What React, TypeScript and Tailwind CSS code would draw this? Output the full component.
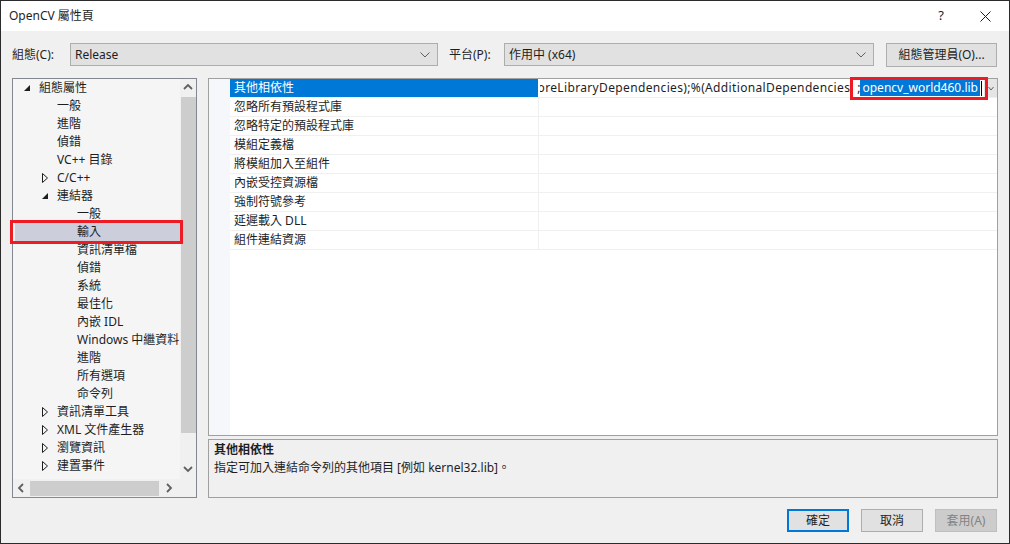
import React from 'react';

const FONT = { fontFamily: '"Noto Sans", "Noto Sans CJK TC", sans-serif' };

type TreeItem = { label: string; level: number; toggle?: 'open' | 'closed'; selected?: boolean };

const treeItems: TreeItem[] = [
  { label: '組態屬性', level: 0, toggle: 'open' },
  { label: '一般', level: 1 },
  { label: '進階', level: 1 },
  { label: '偵錯', level: 1 },
  { label: 'VC++ 目錄', level: 1 },
  { label: 'C/C++', level: 1, toggle: 'closed' },
  { label: '連結器', level: 1, toggle: 'open' },
  { label: '一般', level: 2 },
  { label: '輸入', level: 2, selected: true },
  { label: '資訊清單檔', level: 2 },
  { label: '偵錯', level: 2 },
  { label: '系統', level: 2 },
  { label: '最佳化', level: 2 },
  { label: '內嵌 IDL', level: 2 },
  { label: 'Windows 中繼資料', level: 2 },
  { label: '進階', level: 2 },
  { label: '所有選項', level: 2 },
  { label: '命令列', level: 2 },
  { label: '資訊清單工具', level: 1, toggle: 'closed' },
  { label: 'XML 文件產生器', level: 1, toggle: 'closed' },
  { label: '瀏覽資訊', level: 1, toggle: 'closed' },
  { label: '建置事件', level: 1, toggle: 'closed' },
];

const props = [
  '其他相依性',
  '忽略所有預設程式庫',
  '忽略特定的預設程式庫',
  '模組定義檔',
  '將模組加入至組件',
  '內嵌受控資源檔',
  '強制符號參考',
  '延遲載入 DLL',
  '組件連結資源',
];

const Chevron = ({ dir }: { dir: 'up' | 'down' | 'left' | 'right' }) => {
  const pts: Record<string, string> = {
    up: '1,6 5,2 9,6',
    down: '1,2 5,6 9,2',
    left: '6,1 2,5 6,9',
    right: '2,1 6,5 2,9',
  };
  return (
    <svg width="10" height="10" viewBox="0 0 10 10">
      <polyline points={pts[dir]} fill="none" stroke="#606060" strokeWidth="1.8" />
    </svg>
  );
};

const ComboArrow = () => (
  <svg width="10" height="6" viewBox="0 0 10 6">
    <polyline points="0.5,0.5 5,5 9.5,0.5" fill="none" stroke="#606060" strokeWidth="1" />
  </svg>
);

const Toggle = ({ kind }: { kind: 'open' | 'closed' }) =>
  kind === 'open' ? (
    <svg width="7" height="7" viewBox="0 0 7 7">
      <polygon points="6,0 6,6 0,6" fill="#1e1e1e" />
    </svg>
  ) : (
    <svg width="6" height="10" viewBox="0 0 6 10">
      <polygon points="0.5,0.5 5.5,5 0.5,9.5" fill="none" stroke="#1e1e1e" strokeWidth="1" />
    </svg>
  );

function Tree() {
  return (
    <div className="w-[185px] h-[420px] shrink-0 border border-[#828790] bg-[#f5f5f5] flex flex-col">
      <div className="flex h-[400px]">
        <div className="flex-1 min-w-0 relative text-[12px] text-[#1e1e1e]">
          {treeItems.map((it, i) => (
            <div
              key={i}
              className={
                'relative h-[18px] flex items-center ml-[2px] ' + (it.selected ? 'bg-[#cccedb]' : '')
              }
            >
              <div
                className={
                  'flex items-center justify-center w-[10px] shrink-0 ' +
                  (it.level === 0 ? 'ml-[7px]' : it.level === 1 ? 'ml-[25px]' : 'ml-[45px]')
                }
              >
                {it.toggle && <Toggle kind={it.toggle} />}
              </div>
              <span className="ml-[7px] whitespace-nowrap">{it.label}</span>
              {it.selected && (
                <div className="absolute -top-[3px] -left-[5px] w-[173px] h-[24px] border-[3px] border-[#ed1c24] z-10" />
              )}
            </div>
          ))}
        </div>
        <div className="w-[16px] shrink-0 bg-[#f0f0f0] flex flex-col items-center">
          <div className="h-[18px] flex items-center justify-center">
            <Chevron dir="up" />
          </div>
          <div className="w-[15px] h-[336px] bg-[#cdcdcd]" />
          <div className="flex-1" />
          <div className="h-[18px] flex items-center justify-center">
            <Chevron dir="down" />
          </div>
        </div>
      </div>
      <div className="flex h-[18px] bg-[#f0f0f0]">
        <div className="flex-1 flex items-center">
          <div className="w-[17px] flex justify-center">
            <Chevron dir="left" />
          </div>
          <div className="w-[129px] h-[15px] bg-[#cdcdcd]" />
          <div className="flex-1 flex justify-center">
            <Chevron dir="right" />
          </div>
        </div>
        <div className="w-[16px]" />
      </div>
    </div>
  );
}

function PropertyGrid() {
  return (
    <div className="h-[358px] border border-[#a0a0a0] bg-white flex">
      <div className="w-[21px] shrink-0 bg-[#f5f7fa]" />
      <div className="flex-1 min-w-0 flex flex-col text-[12px] text-[#1e1e1e]">
        {props.map((p, i) => (
          <div key={i} className="h-[19px] flex border-b border-[#f0f0f0]">
            <div
              className={
                'w-[308px] shrink-0 h-[18px] flex items-center pl-[4px] ' +
                (i === 0 ? 'bg-[#0078d7] text-white' : '')
              }
            >
              {p}
            </div>
            {i === 0 ? (
              <div className="flex-1 min-w-0 relative flex items-center pl-[2px]">
                <div className="flex-1 min-w-0 overflow-hidden flex justify-end">
                  <span className="whitespace-nowrap tracking-[0.35px]">oreLibraryDependencies);%(AdditionalDependencies</span>
                </div>
                <span className="ml-[7px]">;</span>
                <span className="bg-[#0078d7] text-white whitespace-nowrap leading-[16px] px-[2px]">opencv_world460.lib</span>
                <span className="w-[1px] h-[15px] bg-black ml-[1px]" />
                <div className="w-[13px] h-[18px] ml-[2px] bg-[#e5e5e5] flex items-center justify-center">
                  <svg width="6" height="5" viewBox="0 0 6 5">
                    <polyline points="0.5,1 3,4 5.5,1" fill="none" stroke="#606060" strokeWidth="1" />
                  </svg>
                </div>
                <div className="absolute top-[-2px] right-[9px] w-[138px] h-[23px] border-[3px] border-[#ed1c24]" />
              </div>
            ) : (
              <div className="flex-1 border-l border-[#f0f0f0]" />
            )}
          </div>
        ))}
      </div>
    </div>
  );
}

function Button({ label, primary, disabled }: { label: string; primary?: boolean; disabled?: boolean }) {
  return (
    <div
      className={
        'w-[62px] h-[23px] flex items-center justify-center text-[12px] ' +
        (primary
          ? 'border-2 border-[#0078d7] bg-[#e1e1e1] text-[#1e1e1e]'
          : disabled
          ? 'border border-[#bfbfbf] bg-[#cccccc] text-[#838383]'
          : 'border border-[#adadad] bg-[#e1e1e1] text-[#1e1e1e]')
      }
    >
      {label}
    </div>
  );
}

export default function App() {
  return (
    <div style={FONT} className="w-[1010px] h-[544px] border border-[#2b2b2b] bg-[#f0f0f0] flex flex-col overflow-hidden">
      <div className="h-[30px] bg-white flex items-center text-[12px] text-[#1e1e1e] shrink-0">
        <span className="ml-[8px]">OpenCV 屬性頁</span>
        <div className="flex-1" />
        <span className="mr-[36px] text-[13px]">?</span>
        <svg width="11" height="11" viewBox="0 0 11 11" className="mr-[18px]">
          <path d="M0.5 0.5 L10.5 10.5 M10.5 0.5 L0.5 10.5" stroke="#1e1e1e" strokeWidth="1" />
        </svg>
      </div>

      <div className="mt-[12px] h-[23px] flex items-center text-[12px] text-[#1e1e1e] shrink-0">
        <span className="ml-[11px] w-[58px]">組態(C):</span>
        <div className="w-[368px] h-[23px] border border-[#adadad] bg-[#e1e1e1] flex items-center pl-[4px] pr-[7px]">
          <span className="flex-1">Release</span>
          <ComboArrow />
        </div>
        <span className="ml-[11px] w-[55px]">平台(P):</span>
        <div className="w-[370px] h-[23px] border border-[#adadad] bg-[#e1e1e1] flex items-center pl-[4px] pr-[7px]">
          <span className="flex-1">作用中 (x64)</span>
          <ComboArrow />
        </div>
        <div className="ml-[12px] w-[111px] h-[24px] border border-[#adadad] bg-[#e1e1e1] flex items-center justify-center">
          組態管理員(O)...
        </div>
      </div>

      <div className="mt-[12px] flex ml-[11px] shrink-0">
        <Tree />
        <div className="ml-[11px] w-[790px] shrink-0 flex flex-col gap-[3px]">
          <PropertyGrid />
          <div className="h-[59px] border border-[#a0a0a0] bg-[#f0f0f0] px-[5px] pt-[1px] text-[12px] text-[#1e1e1e]">
            <div className="font-bold leading-[18px]">其他相依性</div>
            <div className="leading-[18px]">指定可加入連結命令列的其他項目 [例如 kernel32.lib]。</div>
          </div>
        </div>
      </div>

      <div className="mt-[11px] flex justify-end gap-[12px] pr-[12px] shrink-0">
        <Button label="確定" primary />
        <Button label="取消" />
        <Button label="套用(A)" disabled />
      </div>
    </div>
  );
}
